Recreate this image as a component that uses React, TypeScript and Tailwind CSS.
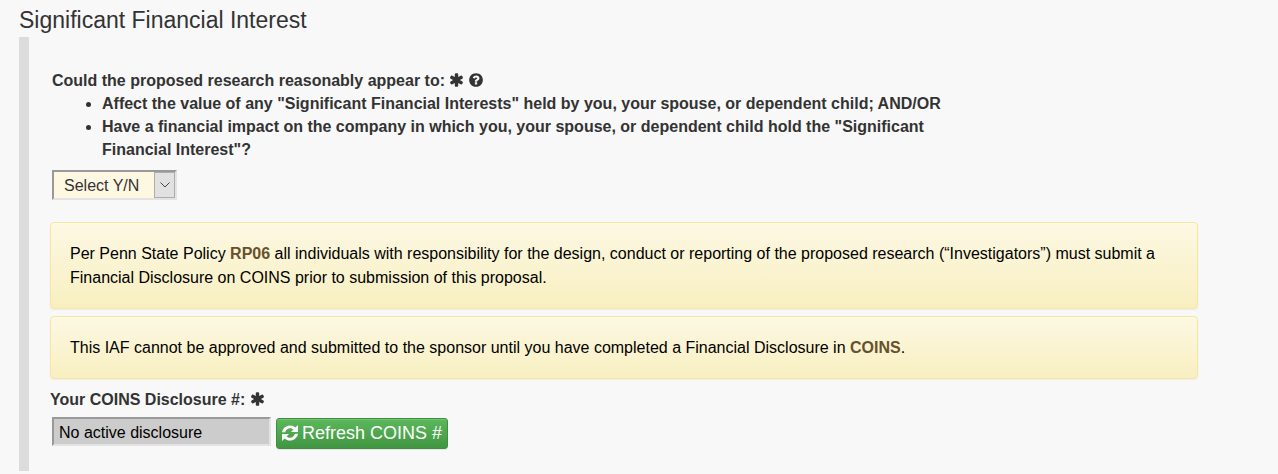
import type { ReactNode } from 'react';

type IconProps = { className: string; label?: string };

function AsteriskIcon({ className, label }: IconProps) {
  return (
    <svg viewBox="0 0 1664 1792" fill="currentColor" className={className} role="img" aria-label={label}>
      <path d="M1482 1050q46 26 59.5 77.5T1529 1225l-64 110q-26 46-77.5 59.5T1290 1382l-266-153v307q0 52-38 90t-90 38H768q-52 0-90-38t-38-90v-307l-266 153q-46 26-97.5 12.5T199 1335l-64-110q-26-46-12.5-97.5T182 1050l266-154-266-154q-46-26-59.5-77.5T135 567l64-110q26-46 77.5-59.5T374 410l266 153V256q0-52 38-90t90-38h128q52 0 90 38t38 90v307l266-153q46-26 97.5-12.5T1465 457l64 110q26 46 12.5 97.5T1482 742l-266 154z" />
    </svg>
  );
}

function HelpIcon({ className, label }: IconProps) {
  return (
    <svg viewBox="0 0 1536 1792" fill="currentColor" className={className} role="img" aria-label={label}>
      <path d="M896 1376v-192q0-14-9-23t-23-9H672q-14 0-23 9t-9 23v192q0 14 9 23t23 9h192q14 0 23-9t9-23zm256-672q0-88-55.5-163T958 425t-170-41q-243 0-371 213-15 24 8 42l132 100q7 6 19 6 16 0 25-12 53-68 86-92 34-24 86-24 48 0 85.5 26t37.5 59q0 38-20 61t-68 45q-63 28-115.500 86.500T640 1020v36q0 14 9 23t23 9h192q14 0 23-9t9-23q0-19 21.500-49.500T972 957q32-18 49-28.500t46-35 44.500-48 28-60.500 12.500-81zm384 192q0 209-103 385.500T1153.500 1561 768 1664t-385.500-103T103 1281.500 0 896t103-385.500T382.500 231 768 128t385.500 103T1433 510.500 1536 896z" />
    </svg>
  );
}

const ARROW = 'M0 7.200C.6 3.400 3.900.4 8 .4c2.100 0 4 .8 5.400 2.100L16 0v7H9l2.400-2.400C10.500 3.700 9.300 3.200 8 3.200c-2.400 0-4.400 1.700-4.900 4z';

function RefreshIcon({ className }: IconProps) {
  return (
    <svg viewBox="0 0 16 16" fill="currentColor" className={className} aria-hidden="true">
      <path d={ARROW} />
      <path d={ARROW} transform="rotate(180 8 8)" />
    </svg>
  );
}

function Notice({ children }: { children: ReactNode }) {
  return (
    <div className="rounded border border-[#f5e79e] bg-linear-to-b from-[#fcf8e3] to-[#f8efc0] px-[19px] pt-[19px] pb-[18px] leading-6 text-black shadow-[inset_0_1px_0_rgba(255,255,255,0.25),0_1px_2px_rgba(0,0,0,0.05)]">
      {children}
    </div>
  );
}

function NoticeLink({ children }: { children: ReactNode }) {
  return (
    <a href="#" className="font-bold text-[#66512c]">
      {children}
    </a>
  );
}

export default function App() {
  return (
    <main className="bg-[#f8f8f8] pt-1 pr-20 pb-1 pl-[19px] font-['Liberation_Sans',Arial,sans-serif] text-base text-[#333]">
      <h1 className="text-[23px] leading-[33px]">Significant Financial Interest</h1>
      <section className="border-l-10 border-[#dcdcdc] pt-8 pb-[22px] pl-[21px]">
        <div className="max-w-[910px] pl-[2px] leading-[23px] font-bold">
          <label htmlFor="appearance">
            Could the proposed research reasonably appear to:{' '}
            <AsteriskIcon className="inline h-4 w-[15px] align-[-2px]" label="required" />{' '}
            <HelpIcon className="inline h-4 w-[14px] align-[-2px]" label="help" />
          </label>
          <ul className="list-disc pl-[50px]">
            <li>
              Affect the value of any "Significant Financial Interests" held by you, your spouse, or dependent child;
              AND/OR
            </li>
            <li>
              Have a financial impact on the company in which you, your spouse, or dependent child hold the
              "Significant Financial Interest"?
            </li>
          </ul>
        </div>
        <div className="mt-[9px] ml-[2px] grid w-[125px] border-2 border-t-[#999] border-r-[#e3e3e3] border-b-[#e3e3e3] border-l-[#999]">
          <select
            id="appearance"
            className="col-start-1 row-start-1 h-[26px] appearance-none bg-[#fef8e2] pt-[2px] pl-[10px] outline-none"
          >
            <option>Select Y/N</option>
            <option>Yes</option>
            <option>No</option>
          </select>
          <span className="pointer-events-none col-start-1 row-start-1 flex w-[21px] items-center justify-center justify-self-end border border-[#adadad] bg-[#e1e1e1]">
            <svg viewBox="0 0 10 6" className="h-[6px] w-[10px]" fill="none" stroke="#444" aria-hidden="true">
              <path d="M.5.5 5 5 9.500.5" />
            </svg>
          </span>
        </div>
        <div className="mt-[22px] grid gap-[7px]">
          <Notice>
            Per Penn State Policy <NoticeLink>RP06</NoticeLink> all individuals with responsibility for the design,
            conduct or reporting of the proposed research (“Investigators”) must submit a Financial Disclosure on COINS
            prior to submission of this proposal.
          </Notice>
          <Notice>
            This IAF cannot be approved and submitted to the sponsor until you have completed a Financial Disclosure in{' '}
            <NoticeLink>COINS</NoticeLink>.
          </Notice>
        </div>
        <label htmlFor="disclosure" className="mt-[9px] block leading-[23px] font-bold">
          Your COINS Disclosure #: <AsteriskIcon className="inline h-4 w-[15px] align-[-2px]" label="required" />
        </label>
        <div className="mt-[6px] flex items-start gap-[5px] pl-[2px]">
          <input
            id="disclosure"
            readOnly
            value="No active disclosure"
            className="h-[29px] w-[219px] border-2 border-t-[#999] border-r-[#e3e3e3] border-b-[#e3e3e3] border-l-[#999] bg-[#ccc] px-[5px] pt-[2px] text-black outline-none"
          />
          <button
            type="button"
            className="mt-px flex h-[31px] items-center gap-1 rounded-[3px] border border-[#3e8f3e] bg-linear-to-b from-[#5cb85c] to-[#419641] px-[5px] pb-[2px] text-lg text-white shadow-[inset_0_1px_0_rgba(255,255,255,0.15),0_1px_1px_rgba(0,0,0,0.075)]"
          >
            <RefreshIcon className="size-4" />
            Refresh COINS #
          </button>
        </div>
      </section>
    </main>
  );
}
